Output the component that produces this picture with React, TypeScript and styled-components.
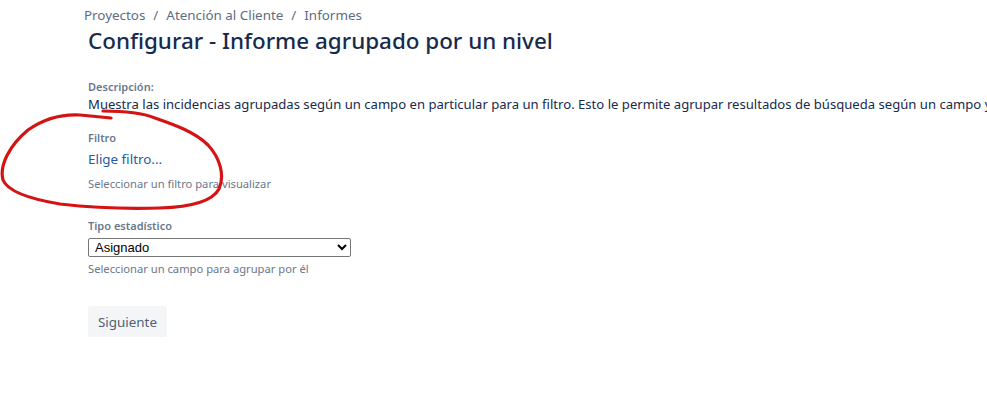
import styled, { createGlobalStyle } from "styled-components";

const GlobalStyle = createGlobalStyle`
  html, body {
    margin: 0;
    padding: 0;
    background: #ffffff;
    overflow: hidden;
  }
  body {
    font-family: "Noto Sans", "Open Sans", sans-serif;
    color: #172b4d;
  }
`;

const Page = styled.div`
  position: relative;
  width: 987px;
  height: 411px;
  padding: 5px 0 0 88px;
  box-sizing: border-box;
  white-space: nowrap;
  overflow: hidden;
`;

const Breadcrumbs = styled.nav`
  display: flex;
  align-items: center;
  gap: 8px;
  margin-left: -4px;
  font-size: 13.4px;
  line-height: 20px;
  color: #5e6c84;
`;

const Crumb = styled.a`
  color: inherit;
  text-decoration: none;
`;

const Title = styled.h1`
  margin: 0;
  font-size: 22.4px;
  font-weight: 500;
  line-height: 32px;
  color: #172b4d;
`;

const Section = styled.div<{ $top: number }>`
  margin-top: ${(p) => p.$top}px;
  display: flex;
  flex-direction: column;
`;

const Label = styled.label`
  font-size: 11px;
  font-weight: 600;
  line-height: 16px;
  color: #6b778c;
`;

const BodyText = styled.p`
  margin: 0;
  font-size: 13.1px;
  line-height: 18px;
  color: #172b4d;
`;

const Link = styled.a`
  margin-top: 4px;
  font-size: 13.4px;
  line-height: 18px;
  color: #205ea8;
  text-decoration: none;
`;

const Helper = styled.span<{ $top: number }>`
  margin-top: ${(p) => p.$top}px;
  font-size: 11.2px;
  line-height: 16px;
  color: #6b778c;
`;

const Select = styled.select`
  margin-top: 4px;
  width: 263px;
  height: 19px;
  box-sizing: border-box;
  padding: 0 2px;
  border: 1px solid #767676;
  border-radius: 2px;
  background: #ffffff;
  font-family: "Liberation Sans", Arial, sans-serif;
  font-size: 13px;
  color: #000000;
`;

const Button = styled.button`
  margin-top: 29px;
  align-self: flex-start;
  height: 31px;
  padding: 0 10px;
  border: none;
  border-radius: 3px;
  background: #f4f5f7;
  font-family: inherit;
  font-size: 13.4px;
  color: #505f79;
`;

const Scribble = styled.svg`
  position: absolute;
  left: 0;
  top: 0;
  pointer-events: none;
`;

export default function App() {
  return (
    <>
      <GlobalStyle />
      <Page>
        <Breadcrumbs>
          <Crumb href="#">Proyectos</Crumb>
          <span>/</span>
          <Crumb href="#">Atención al Cliente</Crumb>
          <span>/</span>
          <Crumb href="#">Informes</Crumb>
        </Breadcrumbs>
        <Title>Configurar - Informe agrupado por un nivel</Title>

        <Section $top={22}>
          <Label>Descripción:</Label>
          <BodyText>
            Muestra las incidencias agrupadas según un campo en particular para un filtro. Esto le
            permite agrupar resultados de búsqueda según un campo y
          </BodyText>
        </Section>

        <Section $top={17}>
          <Label>Filtro</Label>
          <Link href="#">Elige filtro...</Link>
          <Helper $top={8}>Seleccionar un filtro para visualizar</Helper>
        </Section>

        <Section $top={26}>
          <Label>Tipo estadístico</Label>
          <Select defaultValue="asignado">
            <option value="asignado">Asignado</option>
          </Select>
          <Helper $top={4}>Seleccionar un campo para agrupar por él</Helper>
          <Button>Siguiente</Button>
        </Section>

        <Scribble width="987" height="411" viewBox="0 0 987 411">
          <path
            d="M103 111 C 120 111, 140 112, 155 118 C 175 125, 195 132, 208 145 C 220 158, 225 175, 219 189 C 212 202, 190 207, 160 208 C 130 209, 95 208, 60 204 C 30 199, 8 192, 3 180 C -1 165, 10 145, 28 130 C 45 118, 62 114, 80 115 C 92 116, 102 117, 111 118"
            fill="none"
            stroke="#d41414"
            strokeWidth="3.2"
            strokeLinecap="round"
            strokeLinejoin="round"
          />
        </Scribble>
      </Page>
    </>
  );
}
